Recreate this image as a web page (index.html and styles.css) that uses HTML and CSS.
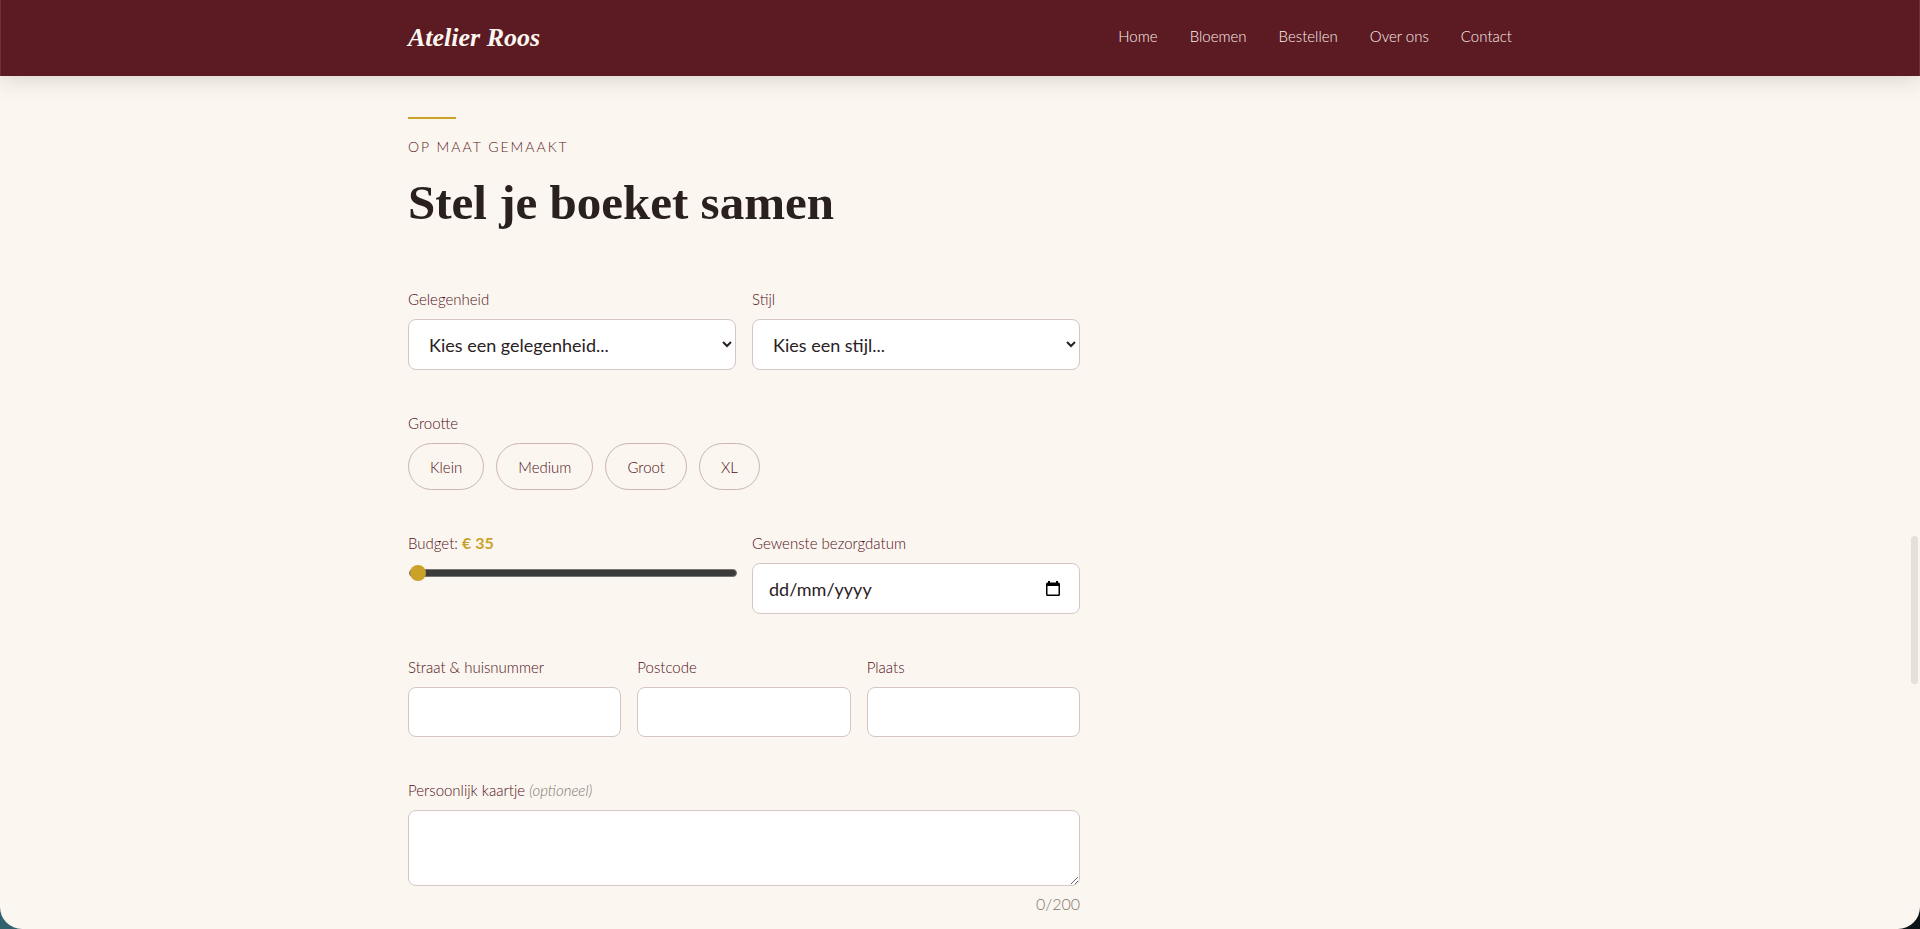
FILE: index.html
```html
<!DOCTYPE html>
<html lang="nl">
<head>
    <meta charset="UTF-8">
    <meta name="viewport" content="width=device-width, initial-scale=1.0">
    <title>Atelier Roos - Stel je boeket samen</title>
    <link rel="stylesheet" href="styles.css">
</head>
<body>
    <div class="page">
        <header class="site-header">
            <div class="container header-inner">
                <a href="#" class="logo">Atelier Roos</a>
                <nav class="site-nav">
                    <a href="#home">Home</a>
                    <a href="#bloemen">Bloemen</a>
                    <a href="#bestellen">Bestellen</a>
                    <a href="#over-ons">Over ons</a>
                    <a href="#contact">Contact</a>
                </nav>
            </div>
        </header>

        <main class="container order" id="bestellen">
            <div class="accent-line"></div>
            <p class="eyebrow">Op maat gemaakt</p>
            <h1>Stel je boeket samen</h1>

            <form class="order-form">
                <div class="form-row two">
                    <div class="field">
                        <label for="gelegenheid">Gelegenheid</label>
                        <select id="gelegenheid" name="gelegenheid">
                            <option>Kies een gelegenheid...</option>
                        </select>
                    </div>
                    <div class="field">
                        <label for="stijl">Stijl</label>
                        <select id="stijl" name="stijl">
                            <option>Kies een stijl...</option>
                        </select>
                    </div>
                </div>

                <div class="field" role="group" aria-labelledby="grootte">
                    <span class="label" id="grootte">Grootte</span>
                    <div class="sizes">
                        <button type="button">Klein</button>
                        <button type="button">Medium</button>
                        <button type="button">Groot</button>
                        <button type="button">XL</button>
                    </div>
                </div>

                <div class="form-row two">
                    <div class="field">
                        <label for="budget">Budget: <strong class="amount">€ 35</strong></label>
                        <input type="range" id="budget" name="budget" min="35" max="250" value="35">
                    </div>
                    <div class="field">
                        <label for="datum">Gewenste bezorgdatum</label>
                        <div class="date-box">
                            <input type="text" id="datum" name="datum" placeholder="dd/mm/yyyy">
                            <svg class="calendar" viewBox="0 0 14 16" aria-hidden="true">
                                <path d="M2 0h2v1.500h6V0h2v1.500h.5A1.500 1.500 0 0 1 14 3v10.500a1.500 1.500 0 0 1-1.500 1.500h-11A1.500 1.500 0 0 1 0 13.500V3a1.500 1.500 0 0 1 1.500-1.500H2zM1.500 5v8.500h11V5z"/>
                            </svg>
                        </div>
                    </div>
                </div>

                <div class="form-row three">
                    <div class="field">
                        <label for="straat">Straat &amp; huisnummer</label>
                        <input type="text" id="straat" name="straat">
                    </div>
                    <div class="field">
                        <label for="postcode">Postcode</label>
                        <input type="text" id="postcode" name="postcode">
                    </div>
                    <div class="field">
                        <label for="plaats">Plaats</label>
                        <input type="text" id="plaats" name="plaats">
                    </div>
                </div>

                <div class="field">
                    <label for="kaartje">Persoonlijk kaartje <em class="optional">(optioneel)</em></label>
                    <textarea id="kaartje" name="kaartje" maxlength="200"></textarea>
                    <span class="counter">0/200</span>
                </div>
            </form>
        </main>
    </div>
    <div class="scroll-thumb"></div>
</body>
</html>
```
FILE: styles.css
```css
* {
    box-sizing: border-box;
}
html {
    background: linear-gradient(90deg, #2f626c, #0b1416);
}
body {
    margin: 0;
    font-family: Lato, sans-serif;
    font-weight: 300;
    color: #2a211e;
}
.page {
    min-height: 100vh;
    background: #fbf6ef;
    border-radius: 0 0 22px 22px;
}
.container {
    max-width: 1200px;
    margin: 0 auto;
    padding: 0 48px;
}

/* Header */
.site-header {
    background: #5c1a23;
    border-left: 1px solid #6b313a;
    border-right: 1px solid #6b313a;
    box-shadow: 0 4px 20px rgba(42, 33, 30, 0.15);
}
.header-inner {
    display: flex;
    justify-content: space-between;
    align-items: center;
    height: 76px;
}
.logo {
    font-family: "Liberation Serif", serif;
    font-size: 26px;
    font-weight: bold;
    font-style: italic;
    color: #fbf6ef;
    text-decoration: none;
}
.site-nav {
    display: flex;
    gap: 32px;
    padding-bottom: 4px;
}
.site-nav a {
    font-size: 15px;
    color: #fbf0ea;
    text-decoration: none;
}

/* Order section */
.order {
    padding-top: 41px;
}
.accent-line {
    width: 48px;
    height: 2px;
    background: #c9a227;
}
.eyebrow {
    margin: 16px 0 12px;
    font-size: 14px;
    line-height: 24px;
    letter-spacing: 2px;
    text-transform: uppercase;
    color: #5c1a23;
}
h1 {
    margin: 0 0 52px;
    font-family: "Liberation Serif", serif;
    font-size: 49px;
    line-height: 64px;
    font-weight: bold;
}
.order-form {
    display: grid;
    gap: 41px;
    max-width: 672px;
}
.form-row {
    display: grid;
    gap: 16px;
}
.two {
    grid-template-columns: 1fr 1fr;
}
.three {
    grid-template-columns: 1fr 1fr 1fr;
}
.field {
    display: flex;
    flex-direction: column;
    min-width: 0;
}
label,
.label {
    margin-bottom: 8px;
    font-size: 15px;
    line-height: 24px;
    color: #500f19;
}
select,
input[type="text"],
textarea {
    width: 100%;
    height: 50px;
    padding: 0 16px;
    border: 1px solid #d6c5c6;
    border-radius: 8px;
    background: #fff;
    font-family: inherit;
    font-size: 18px;
    font-weight: 400;
    color: #2a211e;
}
select,
.date-box input[type="text"] {
    height: 51px;
}
textarea {
    height: 76px;
    padding: 12px 16px;
    resize: vertical;
}
::placeholder {
    color: #2a211e;
}
.sizes {
    display: flex;
    gap: 12px;
}
.sizes button {
    height: 47px;
    padding: 0 21px;
    border: 1px solid #cdb5b4;
    border-radius: 24px;
    background: none;
    font-family: inherit;
    font-size: 15px;
    font-weight: 300;
    color: #500f19;
    cursor: pointer;
}
.amount {
    font-size: 16px;
    font-weight: 700;
    color: #c9a227;
}

/* Budget slider */
input[type="range"] {
    appearance: none;
    width: 100%;
    height: 16px;
    margin: 2px 1px;
    background: none;
}
input[type="range"]::-webkit-slider-runnable-track {
    height: 8px;
    border: 1px solid #777574;
    border-radius: 4px;
    background: #3b3b3b;
}
input[type="range"]::-webkit-slider-thumb {
    appearance: none;
    width: 16px;
    height: 16px;
    margin-top: -5px;
    border-radius: 50%;
    background: #c9a227;
}

.date-box {
    position: relative;
}
.calendar {
    position: absolute;
    top: 18px;
    right: 20px;
    width: 14px;
    height: 16px;
}
.optional,
.counter {
    color: #80766f;
}
.counter {
    margin-top: 6px;
    font-size: 16px;
    line-height: 24px;
    text-align: right;
}
.scroll-thumb {
    position: fixed;
    top: 536px;
    right: 2px;
    width: 7px;
    height: 148px;
    border-radius: 4px;
    background: #e6e0da;
}
```
